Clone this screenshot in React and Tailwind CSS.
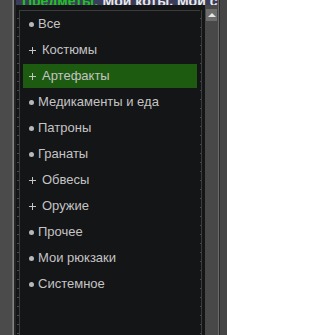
import React from "react";

const items = [
  { m: "•", t: "Все" },
  { m: "+", t: "Костюмы" },
  { m: "+", t: "Артефакты", active: true },
  { m: "•", t: "Медикаменты и еда" },
  { m: "•", t: "Патроны" },
  { m: "•", t: "Гранаты" },
  { m: "+", t: "Обвесы" },
  { m: "+", t: "Оружие" },
  { m: "•", t: "Прочее" },
  { m: "•", t: "Мои рюкзаки" },
  { m: "•", t: "Системное" },
];

export default function App() {
  return (
    <div
      className="w-[227px] h-[335px] overflow-hidden flex bg-[#4a4a4a]"
      style={{ fontFamily: '"Liberation Sans", "DejaVu Sans", sans-serif' }}
    >
      <div className="w-[12px] bg-[#4b4b4b]" />
      <div className="w-[1px] bg-[#6a6a6a]" />
      <div className="w-[1px] bg-[#858585]" />
      <div className="w-[2px] bg-[#252525]" />
      <div className="flex-1 flex flex-col min-w-0">
        <div className="h-[5px] bg-[#3b3c5b] overflow-hidden flex items-end pl-[6px]">
          <div className="whitespace-nowrap text-[14px] font-bold leading-[14px] mb-[-3px]">
            <span className="text-[#1fc21f]">Предметы:</span>
            <span className="text-[#e8e8e8]"> Мои коты. Мой стаж</span>
          </div>
        </div>
        <div className="flex-1 flex bg-[#141517]">
          <div className="w-[4px] pt-[5px]">
            <div className="h-full ml-[1px] w-[3px] border-r border-[#3c3c3c] bg-[repeating-linear-gradient(to_bottom,transparent_0,transparent_8px,#4a4a4a_8px,#4a4a4a_9px)]" />
          </div>
          <div className="w-[181px] pt-[5px] flex flex-col">
            <div className="h-[1px] bg-[#3c3c3c]" />
            <div className="flex flex-col">
              {items.map((it) => (
                <div key={it.t} className="h-[26px] px-[3px] py-[1px]">
                  <div
                    className={
                      "h-full flex items-center text-[13px] text-[#c4c4c4] " +
                      (it.active ? "bg-[#1d5b11]" : "")
                    }
                  >
                    {it.m === "•" ? (
                      <>
                        <span className="block w-[5px] h-[5px] rounded-full bg-[#b8b8b8] ml-[6px]" />
                        <span className="ml-[4px] whitespace-nowrap">{it.t}</span>
                      </>
                    ) : (
                      <>
                        <svg width="7" height="7" viewBox="0 0 7 7" className="ml-[6px] block">
                          <rect x="3" y="0" width="1" height="7" fill="#c4c4c4" />
                          <rect x="0" y="3" width="7" height="1" fill="#c4c4c4" />
                        </svg>
                        <span className="ml-[6px] whitespace-nowrap">{it.t}</span>
                      </>
                    )}
                  </div>
                </div>
              ))}
            </div>
          </div>
          <div className="w-[3px] pt-[5px]">
            <div className="h-full w-[1px] bg-[repeating-linear-gradient(to_bottom,transparent_0,transparent_8px,#4a4a4a_8px,#4a4a4a_9px)] border-r border-[#3c3c3c] box-content" />
          </div>
          <div className="w-[2px]" />
          <div className="w-[13px] bg-[#484848] pt-[4px] px-[1px]">
            <div className="h-[12px] bg-[#6d6d6d] flex items-center justify-center">
              <div className="w-0 h-0 border-l-[4px] border-r-[4px] border-b-[4px] border-l-transparent border-r-transparent border-b-[#e6e6e6]" />
            </div>
          </div>
        </div>
      </div>
      <div className="w-[1px] bg-[#6a6a6a]" />
      <div className="w-[1px] bg-[#2c2c2c]" />
      <div className="w-[7px] bg-[#454545]" />
    </div>
  );
}
